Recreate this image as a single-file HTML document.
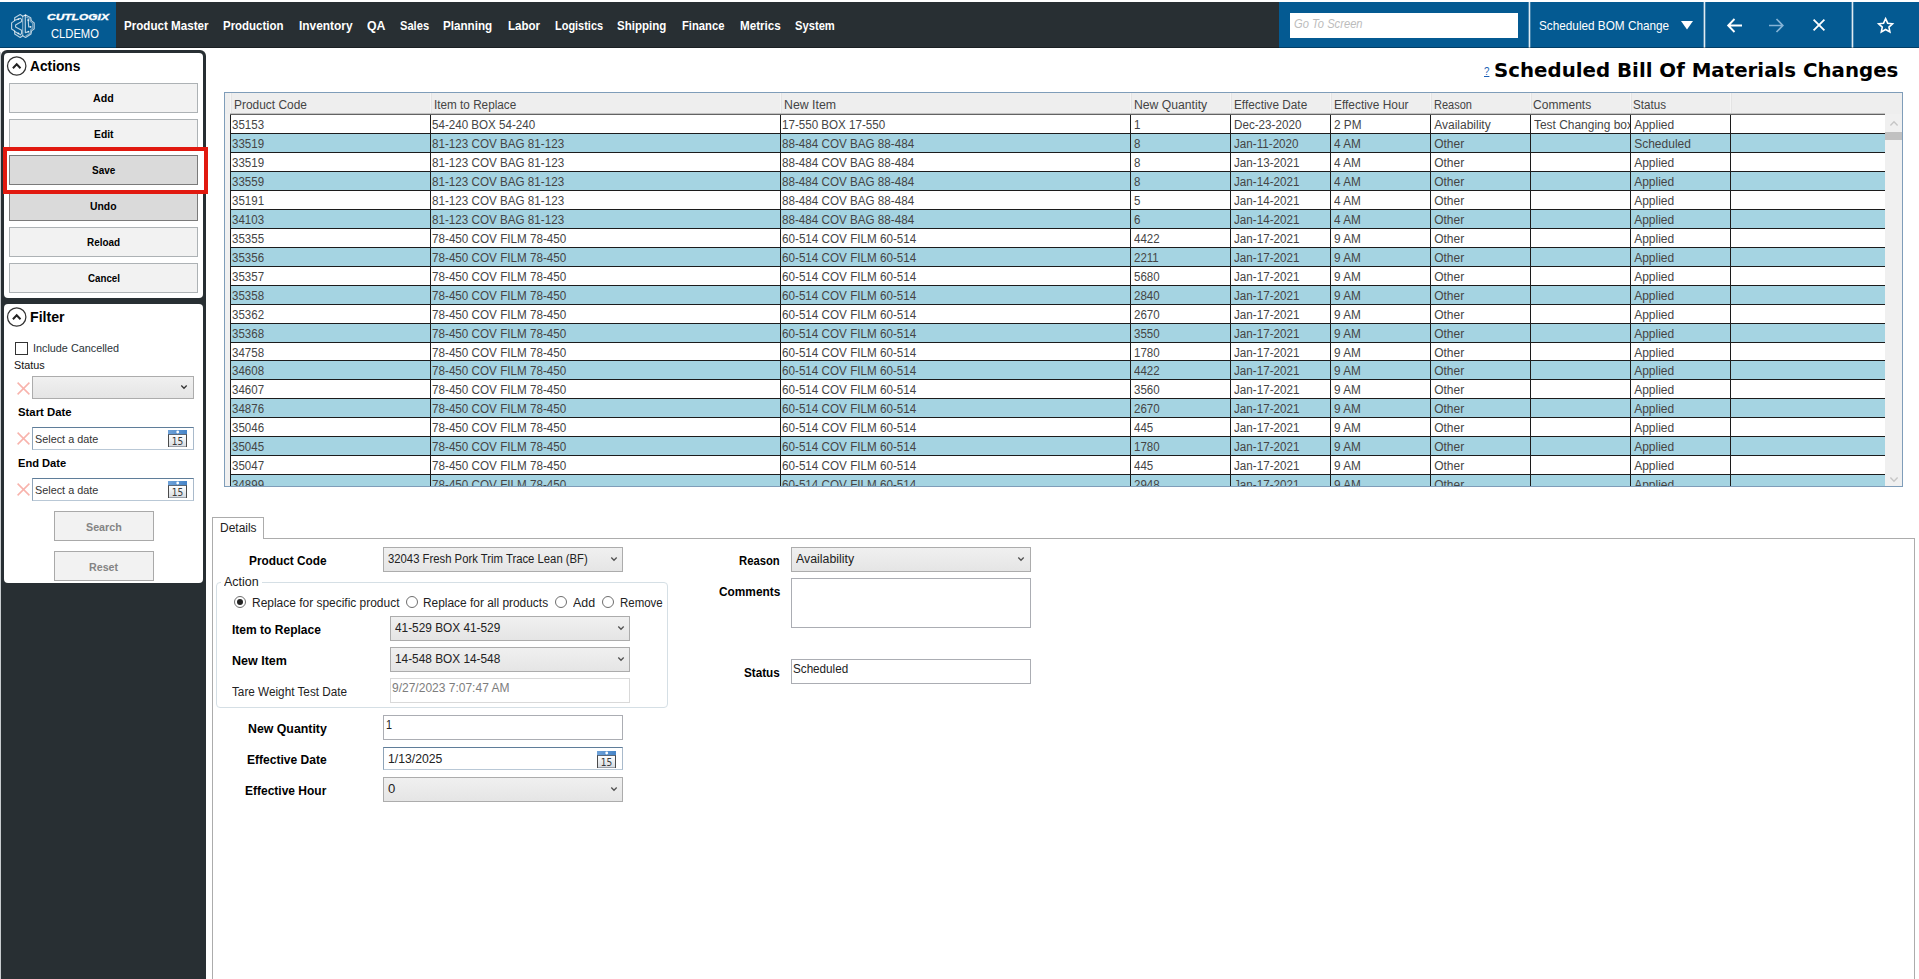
<!DOCTYPE html>
<html lang="en">
<head>
<meta charset="utf-8">
<title>Scheduled Bill Of Materials Changes</title>
<style>

*{box-sizing:border-box;margin:0;padding:0}
html,body{width:1919px;height:979px;overflow:hidden;background:#fff}
body{position:relative;font-family:"Liberation Sans",sans-serif;font-size:12px;color:#000}
.a{position:absolute}
.t{position:absolute;white-space:pre;line-height:1;transform-origin:0 50%;display:block}
#topbar{left:0;top:2px;width:1919px;height:46px;background:#282f33}
#topbar:after{content:'';position:absolute;left:0;bottom:0;width:100%;height:1px;background:rgba(0,0,0,.3)}
#logo{left:0;top:0;width:116px;height:46px;background:#045a92}
#tools{left:1279px;top:0;width:640px;height:46px;background:#045a92}
.vsep{top:0;width:3px;height:46px;background:linear-gradient(90deg,rgba(255,255,255,.3) 33.3%,rgba(255,255,255,.88) 33.3%,rgba(255,255,255,.88) 66.6%,rgba(255,255,255,.25) 66.6%)}
#goto{left:11px;top:11px;width:228px;height:25px;background:#fff}
#side{left:1px;top:50px;width:205px;height:929px;background:#282f33;border-radius:6px 6px 0 0}
.panel{left:3px;width:199px;background:#fff;border-radius:4px}
.btn{left:9px;width:189px;height:30px;background:#f2f2f2;border:1px solid #adb2b5}
.btn.dis{background:#dadada;border-color:#7a7a7a}
.sbtn{left:54px;width:100px;height:30px;background:#f2f2f2;border:1px solid #a9a9a9}
.combo{border:1px solid #acacac;background:linear-gradient(#f0f0f0,#e5e5e5)}
.tb{border:1px solid #abadb3;background:#fff}
.dp{border:1px solid;border-color:#5f7d99 #a9bacb #b9c8d6 #8fa4b8;background:#fff}
svg{position:absolute;overflow:visible}
#grid{left:224px;top:92px;width:1679px;height:395px;border:1px solid #7f9db9;background:#fff;overflow:hidden}
#ghead{left:0;top:0;width:1677px;height:21px;background:#eee}
.hsep{top:0;width:2px;height:20px;background:linear-gradient(90deg,#f5f5f5 50%,#e4e4e4 50%)}
.row{left:5px;width:1655px;border-top:1px solid #1c1c1c;background:#fff;overflow:hidden}
.row.b{background:#a5d4e2}
.c{position:absolute;top:0;height:20px;border-left:1px solid #1c1c1c;overflow:hidden}
#tab{left:212px;top:517px;width:52px;height:22px;border:1px solid #acacac;border-bottom:0;background:#fff}
#tabpanel{left:212px;top:538px;width:1703px;height:460px;border:1px solid #acacac;background:#fff}
#grp{left:216px;top:582px;width:452px;height:126px;border:1px solid #d5dfe5;border-radius:4px}
.radio{width:12.4px;height:12.4px;border:1px solid #6e6e6e;border-radius:50%;background:#fff}
.radio i{position:absolute;left:2.2px;top:2.2px;width:6px;height:6px;border-radius:50%;background:#222}

</style>
</head>
<body>
<div id="topbar" class="a"><div id="logo" class="a"><svg width="116" height="46" viewBox="0 2 116 46" fill="none" stroke="#fff" stroke-opacity=".72" stroke-width="1.15" stroke-linejoin="round" stroke-linecap="round">
<path d="M22.7 16.3L20.2 14.6L14.7 17.7L14.7 20.6L11.6 22.9L11.6 28.9L14.7 30.9L14.7 34L20.2 37.5L22.7 35.7L25.6 37.5L31 34L31.6 30.9L34.2 28.9L34.2 22.9L31.3 20.6L30.7 17.7L25.6 14.9Z"/>
<path d="M14.7 20.3L18.4 19.1L20.4 18.3L21.6 19.4L21.6 21.4L15.6 24.9L15.6 26.9L21.6 30.3L21.6 33.4L20.4 34.9L18.4 33.4L14.7 31.4"/>
<path d="M22.7 16.3L22.7 35.7" stroke-opacity=".5"/>
<path d="M25.3 15.4L25.3 32.6L28.4 31.7M28.2 20L28.7 26.9L30.7 26.9"/>
<path d="M26.7 17.2L29.9 18.9L30.2 21.4L32.7 23.4L32.7 28.3L30.7 29.7L30.2 33.2L25.9 35.7" stroke-opacity=".45"/>
<g fill="#fff" fill-opacity=".8" stroke="none"><circle cx="18.4" cy="19.1" r=".9"/><circle cx="18.4" cy="33.4" r=".9"/><circle cx="28.4" cy="31.7" r=".9"/><circle cx="28.2" cy="20" r=".9"/><circle cx="30.7" cy="26.9" r=".8"/><circle cx="25.4" cy="15.3" r=".9"/></g>
</svg><span class="t" style="left:47.3px;top:11.4px;font-size:9.2px;font-weight:700;font-style:italic;color:#fff;transform:scaleX(1.3040);-webkit-text-stroke:.35px #fff;">CUTLOGIX</span><span class="t" style="left:50.9px;top:25.7px;font-size:12px;color:#fff;transform:scaleX(0.9329);">CLDEMO</span></div><nav><span class="t" style="left:123.8px;top:17.0px;font-size:13px;font-weight:700;color:#fff;transform:scaleX(0.8929);">Product Master</span><span class="t" style="left:223.4px;top:17.0px;font-size:13px;font-weight:700;color:#fff;transform:scaleX(0.8818);">Production</span><span class="t" style="left:299.0px;top:17.0px;font-size:13px;font-weight:700;color:#fff;transform:scaleX(0.9160);">Inventory</span><span class="t" style="left:367.1px;top:17.0px;font-size:13px;font-weight:700;color:#fff;transform:scaleX(0.9487);">QA</span><span class="t" style="left:400.0px;top:17.0px;font-size:13px;font-weight:700;color:#fff;transform:scaleX(0.8563);">Sales</span><span class="t" style="left:443.4px;top:17.0px;font-size:13px;font-weight:700;color:#fff;transform:scaleX(0.8963);">Planning</span><span class="t" style="left:507.9px;top:17.0px;font-size:13px;font-weight:700;color:#fff;transform:scaleX(0.8886);">Labor</span><span class="t" style="left:554.8px;top:17.0px;font-size:13px;font-weight:700;color:#fff;transform:scaleX(0.8427);">Logistics</span><span class="t" style="left:617.4px;top:17.0px;font-size:13px;font-weight:700;color:#fff;transform:scaleX(0.8847);">Shipping</span><span class="t" style="left:681.9px;top:17.0px;font-size:13px;font-weight:700;color:#fff;transform:scaleX(0.8651);">Finance</span><span class="t" style="left:739.8px;top:17.0px;font-size:13px;font-weight:700;color:#fff;transform:scaleX(0.8961);">Metrics</span><span class="t" style="left:795.4px;top:17.0px;font-size:13px;font-weight:700;color:#fff;transform:scaleX(0.8605);">System</span></nav><div id="tools" class="a"><div id="goto" class="a"><span class="t" style="left:3.8px;top:4.8px;font-size:12px;font-style:italic;color:#bcbcbc;transform:scaleX(0.9319);">Go To Screen</span></div><div class="a vsep" style="left:249px"></div><span class="t" style="left:259.5px;top:17.2px;font-size:13px;color:#fff;transform:scaleX(0.9047);">Scheduled BOM Change</span><svg style="left:402px;top:18.5px" width="12" height="9" viewBox="0 0 12 9"><path d="M0 0H12L6 8.5Z" fill="#fff"/></svg><div class="a vsep" style="left:424px;background:linear-gradient(90deg,rgba(255,255,255,.65) 33.3%%,rgba(255,255,255,.9) 33.3%%,rgba(255,255,255,.9) 66.6%%,rgba(255,255,255,.3) 66.6%%)"></div><svg style="left:448.1px;top:15.7px" width="16" height="15" viewBox="0 0 16 15" fill="none" stroke="#fff" stroke-width="1.9"><path d="M15 7.5H1.5M7.5 1L1.2 7.5L7.5 14"/></svg><svg style="left:489.4px;top:15.9px" width="16" height="15" viewBox="0 0 16 15" fill="none" stroke="#85b3d6" stroke-width="1.7"><path d="M1 7.5H14.5M8.5 1L14.8 7.5L8.5 14"/></svg><svg style="left:533.6px;top:17.3px" width="12" height="12" viewBox="0 0 12 12" fill="none" stroke="#fff" stroke-width="1.8"><path d="M.6 .6L11.4 11.4M11.4 .6L.6 11.4"/></svg><div class="a vsep" style="left:572px;background:linear-gradient(90deg,rgba(255,255,255,.55) 33.3%%,rgba(255,255,255,.9) 33.3%%,rgba(255,255,255,.9) 66.6%%,rgba(255,255,255,.1) 66.6%%)"></div><svg style="left:0;top:0" width="640" height="46" viewBox="0 0 640 46" fill="none" stroke="#fff" stroke-width="1.6" stroke-linejoin="miter"><path d="M606.60 16.70L608.66 21.17L613.54 21.74L609.93 25.08L610.89 29.91L606.60 27.50L602.31 29.91L603.27 25.08L599.66 21.74L604.54 21.17Z"/></svg></div></div><div class="a" style="left:0;top:52px;width:1px;height:927px;background:#c9cdd0"></div><aside id="side" class="a"><section class="a panel" style="top:3px;height:245px"></section><svg style="left:6px;top:5.5px" width="20" height="20" viewBox="0 0 20 20" fill="none" stroke="#222"><circle cx="9.7" cy="10" r="9.2" stroke-width="1.25" stroke="#333"/><path d="M5.9 12.2L9.7 8.3L13.5 12.2" stroke-width="2"/></svg><span class="t" style="left:28.7px;top:9.2px;font-size:14px;font-weight:700;transform:scaleX(0.9816);">Actions</span><div class="a btn" style="left:8px;top:33px"></div><span class="t" style="left:92.2px;top:43.8px;font-size:10px;font-weight:700;transform:scaleX(1.0641);">Add</span><div class="a btn" style="left:8px;top:69px"></div><span class="t" style="left:92.8px;top:79.8px;font-size:10px;font-weight:700;transform:scaleX(1.0323);">Edit</span><div class="a btn dis" style="left:8px;top:105px"></div><span class="t" style="left:91.1px;top:115.8px;font-size:10px;font-weight:700;transform:scaleX(0.9975);">Save</span><div class="a btn dis" style="left:8px;top:141px"></div><span class="t" style="left:89.4px;top:151.8px;font-size:10px;font-weight:700;transform:scaleX(1.0373);">Undo</span><div class="a btn" style="left:8px;top:177px"></div><span class="t" style="left:86.3px;top:187.8px;font-size:10px;font-weight:700;transform:scaleX(0.9897);">Reload</span><div class="a btn" style="left:8px;top:213px"></div><span class="t" style="left:86.6px;top:223.8px;font-size:10px;font-weight:700;transform:scaleX(0.9727);">Cancel</span><div class="a" style="left:2px;top:97px;width:205px;height:47px;border:4px solid #e1190f;z-index:5"></div><div class="a" style="left:6px;top:101px;width:197px;height:4px;background:#fff"></div><div class="a" style="left:198px;top:101px;width:5px;height:39px;background:#fff"></div><div class="a" style="left:6px;top:135px;width:197px;height:5px;background:#fff"></div><section class="a panel" style="top:254px;height:279px"></section><svg style="left:6px;top:256.5px" width="20" height="20" viewBox="0 0 20 20" fill="none" stroke="#222"><circle cx="9.7" cy="10" r="9.2" stroke-width="1.25" stroke="#333"/><path d="M5.9 12.2L9.7 8.3L13.5 12.2" stroke-width="2"/></svg><span class="t" style="left:29.0px;top:260.1px;font-size:14px;font-weight:700;transform:scaleX(1.0107);">Filter</span><div class="a" style="left:14px;top:292px;width:13px;height:13px;border:1px solid #333;background:#fff"></div><span class="t" style="left:32.1px;top:292.7px;font-size:11px;color:#2a3338;transform:scaleX(0.9834);">Include Cancelled</span><span class="t" style="left:13.3px;top:310.2px;font-size:11px;color:#111;transform:scaleX(0.9844);">Status</span><svg style="left:16.0px;top:331.6px" width="13" height="13" viewBox="0 0 13 13" fill="none" stroke="#f8b3ac" stroke-width="1.5"><path d="M.6 .6L12.4 12.4M12.4 .6L.6 12.4"/></svg><div class="a combo" style="left:31px;top:326px;width:162px;height:23px"></div><svg style="left:180.4px;top:334.8px" width="6" height="4" viewBox="0 0 6 4" fill="none" stroke="#333" stroke-width="1.25"><path d="M.3 .5L3 3.3L5.7 .5"/></svg><span class="t" style="left:16.9px;top:357.2px;font-size:11px;font-weight:700;transform:scaleX(1.0333);">Start Date</span><svg style="left:16.0px;top:382.4px" width="13" height="13" viewBox="0 0 13 13" fill="none" stroke="#f8b3ac" stroke-width="1.5"><path d="M.6 .6L12.4 12.4M12.4 .6L.6 12.4"/></svg><div class="a dp" style="left:31px;top:377px;width:162px;height:23px"></div><span class="t" style="left:34.1px;top:383.7px;font-size:11px;color:#333;transform:scaleX(0.9857);">Select a date</span><svg style="left:167.0px;top:380.0px" width="19" height="17" viewBox="0 0 19 17"><defs><linearGradient id="cg547" x1="0" y1="0" x2="0" y2="1"><stop offset="0.3" stop-color="#fff"/><stop offset="1" stop-color="#d3d8de"/></linearGradient><linearGradient id="cb547" x1="0" y1="0" x2="1" y2="0"><stop offset="0" stop-color="#6fa2d8"/><stop offset="1" stop-color="#4584c8"/></linearGradient></defs><rect x="0" y="0" width="19" height="17" fill="url(#cg547)"/><rect x="0" y="16" width="19" height="1" fill="#9aa0a8"/><rect x="0" y="0" width="1" height="17" fill="#4a4a4a"/><rect x="18" y="0" width="1" height="17" fill="#4a4a4a"/><rect x="0" y="0" width="19" height="4.2" fill="url(#cb547)"/><rect x="0" y="4.1" width="19" height=".9" fill="#4d5b6b"/><circle cx="9.7" cy="2" r="1.4" fill="#fff"/><text x="9.6" y="14.9" text-anchor="middle" font-family="DejaVu Sans, Liberation Sans, sans-serif" font-size="10" textLength="11.5" lengthAdjust="spacingAndGlyphs" fill="#3a3a3a">15</text></svg><span class="t" style="left:16.9px;top:408.1px;font-size:11px;font-weight:700;transform:scaleX(1.0107);">End Date</span><svg style="left:16.0px;top:433.4px" width="13" height="13" viewBox="0 0 13 13" fill="none" stroke="#f8b3ac" stroke-width="1.5"><path d="M.6 .6L12.4 12.4M12.4 .6L.6 12.4"/></svg><div class="a dp" style="left:31px;top:428px;width:162px;height:23px"></div><span class="t" style="left:34.1px;top:434.7px;font-size:11px;color:#333;transform:scaleX(0.9857);">Select a date</span><svg style="left:167.0px;top:431.0px" width="19" height="17" viewBox="0 0 19 17"><defs><linearGradient id="cg598" x1="0" y1="0" x2="0" y2="1"><stop offset="0.3" stop-color="#fff"/><stop offset="1" stop-color="#d3d8de"/></linearGradient><linearGradient id="cb598" x1="0" y1="0" x2="1" y2="0"><stop offset="0" stop-color="#6fa2d8"/><stop offset="1" stop-color="#4584c8"/></linearGradient></defs><rect x="0" y="0" width="19" height="17" fill="url(#cg598)"/><rect x="0" y="16" width="19" height="1" fill="#9aa0a8"/><rect x="0" y="0" width="1" height="17" fill="#4a4a4a"/><rect x="18" y="0" width="1" height="17" fill="#4a4a4a"/><rect x="0" y="0" width="19" height="4.2" fill="url(#cb598)"/><rect x="0" y="4.1" width="19" height=".9" fill="#4d5b6b"/><circle cx="9.7" cy="2" r="1.4" fill="#fff"/><text x="9.6" y="14.9" text-anchor="middle" font-family="DejaVu Sans, Liberation Sans, sans-serif" font-size="10" textLength="11.5" lengthAdjust="spacingAndGlyphs" fill="#3a3a3a">15</text></svg><div class="a sbtn" style="left:53px;top:461px"></div><span class="t" style="left:84.7px;top:472.1px;font-size:11.5px;font-weight:700;color:#848484;transform:scaleX(0.9307);">Search</span><div class="a sbtn" style="left:53px;top:501px"></div><span class="t" style="left:88.3px;top:512.1px;font-size:11.5px;font-weight:700;color:#848484;transform:scaleX(0.9289);">Reset</span></aside><header><span class="t" style="left:1484.0px;top:65.5px;font-size:10.5px;color:#1a5fb4;transform:scaleX(0.9241);text-decoration:underline;">?</span><h1 style="font-size:inherit;font-weight:inherit"><span class="t" style="left:1494.3px;top:59.5px;font-size:20px;font-weight:700;font-family:'DejaVu Sans','Liberation Sans',sans-serif;transform:scaleX(0.9896);">Scheduled Bill Of Materials Changes</span></h1></header><main><div id="grid" class="a"><div id="ghead" class="a"><span class="t" style="left:8.9px;top:6.0px;font-size:12px;color:#444;transform:scaleX(0.9933);">Product Code</span><span class="t" style="left:209.4px;top:6.0px;font-size:12px;color:#444;transform:scaleX(0.9780);">Item to Replace</span><span class="t" style="left:558.6px;top:6.0px;font-size:12px;color:#444;transform:scaleX(1.0259);">New Item</span><span class="t" style="left:908.6px;top:6.0px;font-size:12px;color:#444;transform:scaleX(1.0162);">New Quantity</span><span class="t" style="left:1008.6px;top:6.0px;font-size:12px;color:#444;transform:scaleX(0.9828);">Effective Date</span><span class="t" style="left:1108.6px;top:6.0px;font-size:12px;color:#444;transform:scaleX(0.9913);">Effective Hour</span><span class="t" style="left:1208.9px;top:6.0px;font-size:12px;color:#444;transform:scaleX(0.9160);">Reason</span><span class="t" style="left:1308.1px;top:6.0px;font-size:12px;color:#444;transform:scaleX(1.0032);">Comments</span><span class="t" style="left:1408.1px;top:6.0px;font-size:12px;color:#444;transform:scaleX(0.9697);">Status</span><div class="a hsep" style="left:5px"></div><div class="a hsep" style="left:205px"></div><div class="a hsep" style="left:555px"></div><div class="a hsep" style="left:905px"></div><div class="a hsep" style="left:1005px"></div><div class="a hsep" style="left:1105px"></div><div class="a hsep" style="left:1205px"></div><div class="a hsep" style="left:1305px"></div><div class="a hsep" style="left:1405px"></div><div class="a hsep" style="left:1505px"></div></div><div class="a" style="left:0;top:21px;width:6px;height:380px;background:#f0f0f0"></div><div class="a" style="left:5px;top:20px;width:1655px;height:1px;background:#c2c2c2"></div><div class="a" style="left:1660px;top:21px;width:17px;height:380px;background:#f0f0f0"></div><div class="a" style="left:1660px;top:39px;width:17px;height:8px;background:#c1c1c1"></div><svg style="left:1664.5px;top:27.5px" width="8" height="5" viewBox="0 0 8 5" fill="none" stroke="#c6c6c6" stroke-width="1.4"><path d="M.4 4.5L4 .8L7.6 4.5"/></svg><svg style="left:1664.5px;top:383.5px" width="8" height="5" viewBox="0 0 8 5" fill="none" stroke="#c6c6c6" stroke-width="1.4"><path d="M.4 .5L4 4.2L7.6 .5"/></svg><div class="a row" style="top:21px;height:19px;border-top-color:#636363"><div class="c" style="left:0px;width:200px"><span class="t" style="left:1.3px;top:4.4px;font-size:12px;color:#444;transform:scaleX(0.960);">35153</span></div><div class="c" style="left:200px;width:350px"><span class="t" style="left:1.3px;top:4.4px;font-size:12px;color:#444;transform:scaleX(0.967);">54-240 BOX 54-240</span></div><div class="c" style="left:550px;width:350px"><span class="t" style="left:1.3px;top:4.4px;font-size:12px;color:#444;transform:scaleX(0.967);">17-550 BOX 17-550</span></div><div class="c" style="left:900px;width:100px"><span class="t" style="left:3.2px;top:4.4px;font-size:12px;color:#444;transform:scaleX(0.960);">1</span></div><div class="c" style="left:1000px;width:100px"><span class="t" style="left:3.2px;top:4.4px;font-size:12px;color:#444;transform:scaleX(0.971);">Dec-23-2020</span></div><div class="c" style="left:1100px;width:100px"><span class="t" style="left:3.2px;top:4.4px;font-size:12px;color:#444;transform:scaleX(0.980);">2 PM</span></div><div class="c" style="left:1200px;width:100px"><span class="t" style="left:3.2px;top:4.4px;font-size:12px;color:#444;transform:scaleX(1.000);">Availability</span></div><div class="c" style="left:1300px;width:100px"><span class="t" style="left:3.2px;top:4.4px;font-size:12px;color:#444;transform:scaleX(0.995);">Test Changing box</span></div><div class="c" style="left:1400px;width:100px"><span class="t" style="left:3.2px;top:4.4px;font-size:12px;color:#444;transform:scaleX(1.000);">Applied</span></div><div class="c" style="left:1500px;width:155px"></div></div><div class="a row b" style="top:40px;height:19px"><div class="c" style="left:0px;width:200px"><span class="t" style="left:1.3px;top:4.4px;font-size:12px;color:#444;transform:scaleX(0.960);">33519</span></div><div class="c" style="left:200px;width:350px"><span class="t" style="left:1.3px;top:4.4px;font-size:12px;color:#444;transform:scaleX(0.971);">81-123 COV BAG 81-123</span></div><div class="c" style="left:550px;width:350px"><span class="t" style="left:1.3px;top:4.4px;font-size:12px;color:#444;transform:scaleX(0.971);">88-484 COV BAG 88-484</span></div><div class="c" style="left:900px;width:100px"><span class="t" style="left:3.2px;top:4.4px;font-size:12px;color:#444;transform:scaleX(0.960);">8</span></div><div class="c" style="left:1000px;width:100px"><span class="t" style="left:3.2px;top:4.4px;font-size:12px;color:#444;transform:scaleX(0.971);">Jan-11-2020</span></div><div class="c" style="left:1100px;width:100px"><span class="t" style="left:3.2px;top:4.4px;font-size:12px;color:#444;transform:scaleX(0.980);">4 AM</span></div><div class="c" style="left:1200px;width:100px"><span class="t" style="left:3.2px;top:4.4px;font-size:12px;color:#444;transform:scaleX(1.000);">Other</span></div><div class="c" style="left:1300px;width:100px"></div><div class="c" style="left:1400px;width:100px"><span class="t" style="left:3.2px;top:4.4px;font-size:12px;color:#444;transform:scaleX(1.000);">Scheduled</span></div><div class="c" style="left:1500px;width:155px"></div></div><div class="a row" style="top:59px;height:19px"><div class="c" style="left:0px;width:200px"><span class="t" style="left:1.3px;top:4.4px;font-size:12px;color:#444;transform:scaleX(0.960);">33519</span></div><div class="c" style="left:200px;width:350px"><span class="t" style="left:1.3px;top:4.4px;font-size:12px;color:#444;transform:scaleX(0.971);">81-123 COV BAG 81-123</span></div><div class="c" style="left:550px;width:350px"><span class="t" style="left:1.3px;top:4.4px;font-size:12px;color:#444;transform:scaleX(0.971);">88-484 COV BAG 88-484</span></div><div class="c" style="left:900px;width:100px"><span class="t" style="left:3.2px;top:4.4px;font-size:12px;color:#444;transform:scaleX(0.960);">8</span></div><div class="c" style="left:1000px;width:100px"><span class="t" style="left:3.2px;top:4.4px;font-size:12px;color:#444;transform:scaleX(0.971);">Jan-13-2021</span></div><div class="c" style="left:1100px;width:100px"><span class="t" style="left:3.2px;top:4.4px;font-size:12px;color:#444;transform:scaleX(0.980);">4 AM</span></div><div class="c" style="left:1200px;width:100px"><span class="t" style="left:3.2px;top:4.4px;font-size:12px;color:#444;transform:scaleX(1.000);">Other</span></div><div class="c" style="left:1300px;width:100px"></div><div class="c" style="left:1400px;width:100px"><span class="t" style="left:3.2px;top:4.4px;font-size:12px;color:#444;transform:scaleX(1.000);">Applied</span></div><div class="c" style="left:1500px;width:155px"></div></div><div class="a row b" style="top:78px;height:19px"><div class="c" style="left:0px;width:200px"><span class="t" style="left:1.3px;top:4.4px;font-size:12px;color:#444;transform:scaleX(0.960);">33559</span></div><div class="c" style="left:200px;width:350px"><span class="t" style="left:1.3px;top:4.4px;font-size:12px;color:#444;transform:scaleX(0.971);">81-123 COV BAG 81-123</span></div><div class="c" style="left:550px;width:350px"><span class="t" style="left:1.3px;top:4.4px;font-size:12px;color:#444;transform:scaleX(0.971);">88-484 COV BAG 88-484</span></div><div class="c" style="left:900px;width:100px"><span class="t" style="left:3.2px;top:4.4px;font-size:12px;color:#444;transform:scaleX(0.960);">8</span></div><div class="c" style="left:1000px;width:100px"><span class="t" style="left:3.2px;top:4.4px;font-size:12px;color:#444;transform:scaleX(0.971);">Jan-14-2021</span></div><div class="c" style="left:1100px;width:100px"><span class="t" style="left:3.2px;top:4.4px;font-size:12px;color:#444;transform:scaleX(0.980);">4 AM</span></div><div class="c" style="left:1200px;width:100px"><span class="t" style="left:3.2px;top:4.4px;font-size:12px;color:#444;transform:scaleX(1.000);">Other</span></div><div class="c" style="left:1300px;width:100px"></div><div class="c" style="left:1400px;width:100px"><span class="t" style="left:3.2px;top:4.4px;font-size:12px;color:#444;transform:scaleX(1.000);">Applied</span></div><div class="c" style="left:1500px;width:155px"></div></div><div class="a row" style="top:97px;height:19px"><div class="c" style="left:0px;width:200px"><span class="t" style="left:1.3px;top:4.4px;font-size:12px;color:#444;transform:scaleX(0.960);">35191</span></div><div class="c" style="left:200px;width:350px"><span class="t" style="left:1.3px;top:4.4px;font-size:12px;color:#444;transform:scaleX(0.971);">81-123 COV BAG 81-123</span></div><div class="c" style="left:550px;width:350px"><span class="t" style="left:1.3px;top:4.4px;font-size:12px;color:#444;transform:scaleX(0.971);">88-484 COV BAG 88-484</span></div><div class="c" style="left:900px;width:100px"><span class="t" style="left:3.2px;top:4.4px;font-size:12px;color:#444;transform:scaleX(0.960);">5</span></div><div class="c" style="left:1000px;width:100px"><span class="t" style="left:3.2px;top:4.4px;font-size:12px;color:#444;transform:scaleX(0.971);">Jan-14-2021</span></div><div class="c" style="left:1100px;width:100px"><span class="t" style="left:3.2px;top:4.4px;font-size:12px;color:#444;transform:scaleX(0.980);">4 AM</span></div><div class="c" style="left:1200px;width:100px"><span class="t" style="left:3.2px;top:4.4px;font-size:12px;color:#444;transform:scaleX(1.000);">Other</span></div><div class="c" style="left:1300px;width:100px"></div><div class="c" style="left:1400px;width:100px"><span class="t" style="left:3.2px;top:4.4px;font-size:12px;color:#444;transform:scaleX(1.000);">Applied</span></div><div class="c" style="left:1500px;width:155px"></div></div><div class="a row b" style="top:116px;height:19px"><div class="c" style="left:0px;width:200px"><span class="t" style="left:1.3px;top:4.4px;font-size:12px;color:#444;transform:scaleX(0.960);">34103</span></div><div class="c" style="left:200px;width:350px"><span class="t" style="left:1.3px;top:4.4px;font-size:12px;color:#444;transform:scaleX(0.971);">81-123 COV BAG 81-123</span></div><div class="c" style="left:550px;width:350px"><span class="t" style="left:1.3px;top:4.4px;font-size:12px;color:#444;transform:scaleX(0.971);">88-484 COV BAG 88-484</span></div><div class="c" style="left:900px;width:100px"><span class="t" style="left:3.2px;top:4.4px;font-size:12px;color:#444;transform:scaleX(0.960);">6</span></div><div class="c" style="left:1000px;width:100px"><span class="t" style="left:3.2px;top:4.4px;font-size:12px;color:#444;transform:scaleX(0.971);">Jan-14-2021</span></div><div class="c" style="left:1100px;width:100px"><span class="t" style="left:3.2px;top:4.4px;font-size:12px;color:#444;transform:scaleX(0.980);">4 AM</span></div><div class="c" style="left:1200px;width:100px"><span class="t" style="left:3.2px;top:4.4px;font-size:12px;color:#444;transform:scaleX(1.000);">Other</span></div><div class="c" style="left:1300px;width:100px"></div><div class="c" style="left:1400px;width:100px"><span class="t" style="left:3.2px;top:4.4px;font-size:12px;color:#444;transform:scaleX(1.000);">Applied</span></div><div class="c" style="left:1500px;width:155px"></div></div><div class="a row" style="top:135px;height:19px"><div class="c" style="left:0px;width:200px"><span class="t" style="left:1.3px;top:4.4px;font-size:12px;color:#444;transform:scaleX(0.960);">35355</span></div><div class="c" style="left:200px;width:350px"><span class="t" style="left:1.3px;top:4.4px;font-size:12px;color:#444;transform:scaleX(0.973);">78-450 COV FILM 78-450</span></div><div class="c" style="left:550px;width:350px"><span class="t" style="left:1.3px;top:4.4px;font-size:12px;color:#444;transform:scaleX(0.973);">60-514 COV FILM 60-514</span></div><div class="c" style="left:900px;width:100px"><span class="t" style="left:3.2px;top:4.4px;font-size:12px;color:#444;transform:scaleX(0.960);">4422</span></div><div class="c" style="left:1000px;width:100px"><span class="t" style="left:3.2px;top:4.4px;font-size:12px;color:#444;transform:scaleX(0.971);">Jan-17-2021</span></div><div class="c" style="left:1100px;width:100px"><span class="t" style="left:3.2px;top:4.4px;font-size:12px;color:#444;transform:scaleX(0.980);">9 AM</span></div><div class="c" style="left:1200px;width:100px"><span class="t" style="left:3.2px;top:4.4px;font-size:12px;color:#444;transform:scaleX(1.000);">Other</span></div><div class="c" style="left:1300px;width:100px"></div><div class="c" style="left:1400px;width:100px"><span class="t" style="left:3.2px;top:4.4px;font-size:12px;color:#444;transform:scaleX(1.000);">Applied</span></div><div class="c" style="left:1500px;width:155px"></div></div><div class="a row b" style="top:154px;height:19px"><div class="c" style="left:0px;width:200px"><span class="t" style="left:1.3px;top:4.4px;font-size:12px;color:#444;transform:scaleX(0.960);">35356</span></div><div class="c" style="left:200px;width:350px"><span class="t" style="left:1.3px;top:4.4px;font-size:12px;color:#444;transform:scaleX(0.973);">78-450 COV FILM 78-450</span></div><div class="c" style="left:550px;width:350px"><span class="t" style="left:1.3px;top:4.4px;font-size:12px;color:#444;transform:scaleX(0.973);">60-514 COV FILM 60-514</span></div><div class="c" style="left:900px;width:100px"><span class="t" style="left:3.2px;top:4.4px;font-size:12px;color:#444;transform:scaleX(0.960);">2211</span></div><div class="c" style="left:1000px;width:100px"><span class="t" style="left:3.2px;top:4.4px;font-size:12px;color:#444;transform:scaleX(0.971);">Jan-17-2021</span></div><div class="c" style="left:1100px;width:100px"><span class="t" style="left:3.2px;top:4.4px;font-size:12px;color:#444;transform:scaleX(0.980);">9 AM</span></div><div class="c" style="left:1200px;width:100px"><span class="t" style="left:3.2px;top:4.4px;font-size:12px;color:#444;transform:scaleX(1.000);">Other</span></div><div class="c" style="left:1300px;width:100px"></div><div class="c" style="left:1400px;width:100px"><span class="t" style="left:3.2px;top:4.4px;font-size:12px;color:#444;transform:scaleX(1.000);">Applied</span></div><div class="c" style="left:1500px;width:155px"></div></div><div class="a row" style="top:173px;height:19px"><div class="c" style="left:0px;width:200px"><span class="t" style="left:1.3px;top:4.4px;font-size:12px;color:#444;transform:scaleX(0.960);">35357</span></div><div class="c" style="left:200px;width:350px"><span class="t" style="left:1.3px;top:4.4px;font-size:12px;color:#444;transform:scaleX(0.973);">78-450 COV FILM 78-450</span></div><div class="c" style="left:550px;width:350px"><span class="t" style="left:1.3px;top:4.4px;font-size:12px;color:#444;transform:scaleX(0.973);">60-514 COV FILM 60-514</span></div><div class="c" style="left:900px;width:100px"><span class="t" style="left:3.2px;top:4.4px;font-size:12px;color:#444;transform:scaleX(0.960);">5680</span></div><div class="c" style="left:1000px;width:100px"><span class="t" style="left:3.2px;top:4.4px;font-size:12px;color:#444;transform:scaleX(0.971);">Jan-17-2021</span></div><div class="c" style="left:1100px;width:100px"><span class="t" style="left:3.2px;top:4.4px;font-size:12px;color:#444;transform:scaleX(0.980);">9 AM</span></div><div class="c" style="left:1200px;width:100px"><span class="t" style="left:3.2px;top:4.4px;font-size:12px;color:#444;transform:scaleX(1.000);">Other</span></div><div class="c" style="left:1300px;width:100px"></div><div class="c" style="left:1400px;width:100px"><span class="t" style="left:3.2px;top:4.4px;font-size:12px;color:#444;transform:scaleX(1.000);">Applied</span></div><div class="c" style="left:1500px;width:155px"></div></div><div class="a row b" style="top:192px;height:19px"><div class="c" style="left:0px;width:200px"><span class="t" style="left:1.3px;top:4.4px;font-size:12px;color:#444;transform:scaleX(0.960);">35358</span></div><div class="c" style="left:200px;width:350px"><span class="t" style="left:1.3px;top:4.4px;font-size:12px;color:#444;transform:scaleX(0.973);">78-450 COV FILM 78-450</span></div><div class="c" style="left:550px;width:350px"><span class="t" style="left:1.3px;top:4.4px;font-size:12px;color:#444;transform:scaleX(0.973);">60-514 COV FILM 60-514</span></div><div class="c" style="left:900px;width:100px"><span class="t" style="left:3.2px;top:4.4px;font-size:12px;color:#444;transform:scaleX(0.960);">2840</span></div><div class="c" style="left:1000px;width:100px"><span class="t" style="left:3.2px;top:4.4px;font-size:12px;color:#444;transform:scaleX(0.971);">Jan-17-2021</span></div><div class="c" style="left:1100px;width:100px"><span class="t" style="left:3.2px;top:4.4px;font-size:12px;color:#444;transform:scaleX(0.980);">9 AM</span></div><div class="c" style="left:1200px;width:100px"><span class="t" style="left:3.2px;top:4.4px;font-size:12px;color:#444;transform:scaleX(1.000);">Other</span></div><div class="c" style="left:1300px;width:100px"></div><div class="c" style="left:1400px;width:100px"><span class="t" style="left:3.2px;top:4.4px;font-size:12px;color:#444;transform:scaleX(1.000);">Applied</span></div><div class="c" style="left:1500px;width:155px"></div></div><div class="a row" style="top:211px;height:19px"><div class="c" style="left:0px;width:200px"><span class="t" style="left:1.3px;top:4.4px;font-size:12px;color:#444;transform:scaleX(0.960);">35362</span></div><div class="c" style="left:200px;width:350px"><span class="t" style="left:1.3px;top:4.4px;font-size:12px;color:#444;transform:scaleX(0.973);">78-450 COV FILM 78-450</span></div><div class="c" style="left:550px;width:350px"><span class="t" style="left:1.3px;top:4.4px;font-size:12px;color:#444;transform:scaleX(0.973);">60-514 COV FILM 60-514</span></div><div class="c" style="left:900px;width:100px"><span class="t" style="left:3.2px;top:4.4px;font-size:12px;color:#444;transform:scaleX(0.960);">2670</span></div><div class="c" style="left:1000px;width:100px"><span class="t" style="left:3.2px;top:4.4px;font-size:12px;color:#444;transform:scaleX(0.971);">Jan-17-2021</span></div><div class="c" style="left:1100px;width:100px"><span class="t" style="left:3.2px;top:4.4px;font-size:12px;color:#444;transform:scaleX(0.980);">9 AM</span></div><div class="c" style="left:1200px;width:100px"><span class="t" style="left:3.2px;top:4.4px;font-size:12px;color:#444;transform:scaleX(1.000);">Other</span></div><div class="c" style="left:1300px;width:100px"></div><div class="c" style="left:1400px;width:100px"><span class="t" style="left:3.2px;top:4.4px;font-size:12px;color:#444;transform:scaleX(1.000);">Applied</span></div><div class="c" style="left:1500px;width:155px"></div></div><div class="a row b" style="top:230px;height:19px"><div class="c" style="left:0px;width:200px"><span class="t" style="left:1.3px;top:4.4px;font-size:12px;color:#444;transform:scaleX(0.960);">35368</span></div><div class="c" style="left:200px;width:350px"><span class="t" style="left:1.3px;top:4.4px;font-size:12px;color:#444;transform:scaleX(0.973);">78-450 COV FILM 78-450</span></div><div class="c" style="left:550px;width:350px"><span class="t" style="left:1.3px;top:4.4px;font-size:12px;color:#444;transform:scaleX(0.973);">60-514 COV FILM 60-514</span></div><div class="c" style="left:900px;width:100px"><span class="t" style="left:3.2px;top:4.4px;font-size:12px;color:#444;transform:scaleX(0.960);">3550</span></div><div class="c" style="left:1000px;width:100px"><span class="t" style="left:3.2px;top:4.4px;font-size:12px;color:#444;transform:scaleX(0.971);">Jan-17-2021</span></div><div class="c" style="left:1100px;width:100px"><span class="t" style="left:3.2px;top:4.4px;font-size:12px;color:#444;transform:scaleX(0.980);">9 AM</span></div><div class="c" style="left:1200px;width:100px"><span class="t" style="left:3.2px;top:4.4px;font-size:12px;color:#444;transform:scaleX(1.000);">Other</span></div><div class="c" style="left:1300px;width:100px"></div><div class="c" style="left:1400px;width:100px"><span class="t" style="left:3.2px;top:4.4px;font-size:12px;color:#444;transform:scaleX(1.000);">Applied</span></div><div class="c" style="left:1500px;width:155px"></div></div><div class="a row" style="top:249px;height:18px"><div class="c" style="left:0px;width:200px"><span class="t" style="left:1.3px;top:4.4px;font-size:12px;color:#444;transform:scaleX(0.960);">34758</span></div><div class="c" style="left:200px;width:350px"><span class="t" style="left:1.3px;top:4.4px;font-size:12px;color:#444;transform:scaleX(0.973);">78-450 COV FILM 78-450</span></div><div class="c" style="left:550px;width:350px"><span class="t" style="left:1.3px;top:4.4px;font-size:12px;color:#444;transform:scaleX(0.973);">60-514 COV FILM 60-514</span></div><div class="c" style="left:900px;width:100px"><span class="t" style="left:3.2px;top:4.4px;font-size:12px;color:#444;transform:scaleX(0.960);">1780</span></div><div class="c" style="left:1000px;width:100px"><span class="t" style="left:3.2px;top:4.4px;font-size:12px;color:#444;transform:scaleX(0.971);">Jan-17-2021</span></div><div class="c" style="left:1100px;width:100px"><span class="t" style="left:3.2px;top:4.4px;font-size:12px;color:#444;transform:scaleX(0.980);">9 AM</span></div><div class="c" style="left:1200px;width:100px"><span class="t" style="left:3.2px;top:4.4px;font-size:12px;color:#444;transform:scaleX(1.000);">Other</span></div><div class="c" style="left:1300px;width:100px"></div><div class="c" style="left:1400px;width:100px"><span class="t" style="left:3.2px;top:4.4px;font-size:12px;color:#444;transform:scaleX(1.000);">Applied</span></div><div class="c" style="left:1500px;width:155px"></div></div><div class="a row b" style="top:267px;height:19px"><div class="c" style="left:0px;width:200px"><span class="t" style="left:1.3px;top:4.4px;font-size:12px;color:#444;transform:scaleX(0.960);">34608</span></div><div class="c" style="left:200px;width:350px"><span class="t" style="left:1.3px;top:4.4px;font-size:12px;color:#444;transform:scaleX(0.973);">78-450 COV FILM 78-450</span></div><div class="c" style="left:550px;width:350px"><span class="t" style="left:1.3px;top:4.4px;font-size:12px;color:#444;transform:scaleX(0.973);">60-514 COV FILM 60-514</span></div><div class="c" style="left:900px;width:100px"><span class="t" style="left:3.2px;top:4.4px;font-size:12px;color:#444;transform:scaleX(0.960);">4422</span></div><div class="c" style="left:1000px;width:100px"><span class="t" style="left:3.2px;top:4.4px;font-size:12px;color:#444;transform:scaleX(0.971);">Jan-17-2021</span></div><div class="c" style="left:1100px;width:100px"><span class="t" style="left:3.2px;top:4.4px;font-size:12px;color:#444;transform:scaleX(0.980);">9 AM</span></div><div class="c" style="left:1200px;width:100px"><span class="t" style="left:3.2px;top:4.4px;font-size:12px;color:#444;transform:scaleX(1.000);">Other</span></div><div class="c" style="left:1300px;width:100px"></div><div class="c" style="left:1400px;width:100px"><span class="t" style="left:3.2px;top:4.4px;font-size:12px;color:#444;transform:scaleX(1.000);">Applied</span></div><div class="c" style="left:1500px;width:155px"></div></div><div class="a row" style="top:286px;height:19px"><div class="c" style="left:0px;width:200px"><span class="t" style="left:1.3px;top:4.4px;font-size:12px;color:#444;transform:scaleX(0.960);">34607</span></div><div class="c" style="left:200px;width:350px"><span class="t" style="left:1.3px;top:4.4px;font-size:12px;color:#444;transform:scaleX(0.973);">78-450 COV FILM 78-450</span></div><div class="c" style="left:550px;width:350px"><span class="t" style="left:1.3px;top:4.4px;font-size:12px;color:#444;transform:scaleX(0.973);">60-514 COV FILM 60-514</span></div><div class="c" style="left:900px;width:100px"><span class="t" style="left:3.2px;top:4.4px;font-size:12px;color:#444;transform:scaleX(0.960);">3560</span></div><div class="c" style="left:1000px;width:100px"><span class="t" style="left:3.2px;top:4.4px;font-size:12px;color:#444;transform:scaleX(0.971);">Jan-17-2021</span></div><div class="c" style="left:1100px;width:100px"><span class="t" style="left:3.2px;top:4.4px;font-size:12px;color:#444;transform:scaleX(0.980);">9 AM</span></div><div class="c" style="left:1200px;width:100px"><span class="t" style="left:3.2px;top:4.4px;font-size:12px;color:#444;transform:scaleX(1.000);">Other</span></div><div class="c" style="left:1300px;width:100px"></div><div class="c" style="left:1400px;width:100px"><span class="t" style="left:3.2px;top:4.4px;font-size:12px;color:#444;transform:scaleX(1.000);">Applied</span></div><div class="c" style="left:1500px;width:155px"></div></div><div class="a row b" style="top:305px;height:19px"><div class="c" style="left:0px;width:200px"><span class="t" style="left:1.3px;top:4.4px;font-size:12px;color:#444;transform:scaleX(0.960);">34876</span></div><div class="c" style="left:200px;width:350px"><span class="t" style="left:1.3px;top:4.4px;font-size:12px;color:#444;transform:scaleX(0.973);">78-450 COV FILM 78-450</span></div><div class="c" style="left:550px;width:350px"><span class="t" style="left:1.3px;top:4.4px;font-size:12px;color:#444;transform:scaleX(0.973);">60-514 COV FILM 60-514</span></div><div class="c" style="left:900px;width:100px"><span class="t" style="left:3.2px;top:4.4px;font-size:12px;color:#444;transform:scaleX(0.960);">2670</span></div><div class="c" style="left:1000px;width:100px"><span class="t" style="left:3.2px;top:4.4px;font-size:12px;color:#444;transform:scaleX(0.971);">Jan-17-2021</span></div><div class="c" style="left:1100px;width:100px"><span class="t" style="left:3.2px;top:4.4px;font-size:12px;color:#444;transform:scaleX(0.980);">9 AM</span></div><div class="c" style="left:1200px;width:100px"><span class="t" style="left:3.2px;top:4.4px;font-size:12px;color:#444;transform:scaleX(1.000);">Other</span></div><div class="c" style="left:1300px;width:100px"></div><div class="c" style="left:1400px;width:100px"><span class="t" style="left:3.2px;top:4.4px;font-size:12px;color:#444;transform:scaleX(1.000);">Applied</span></div><div class="c" style="left:1500px;width:155px"></div></div><div class="a row" style="top:324px;height:19px"><div class="c" style="left:0px;width:200px"><span class="t" style="left:1.3px;top:4.4px;font-size:12px;color:#444;transform:scaleX(0.960);">35046</span></div><div class="c" style="left:200px;width:350px"><span class="t" style="left:1.3px;top:4.4px;font-size:12px;color:#444;transform:scaleX(0.973);">78-450 COV FILM 78-450</span></div><div class="c" style="left:550px;width:350px"><span class="t" style="left:1.3px;top:4.4px;font-size:12px;color:#444;transform:scaleX(0.973);">60-514 COV FILM 60-514</span></div><div class="c" style="left:900px;width:100px"><span class="t" style="left:3.2px;top:4.4px;font-size:12px;color:#444;transform:scaleX(0.960);">445</span></div><div class="c" style="left:1000px;width:100px"><span class="t" style="left:3.2px;top:4.4px;font-size:12px;color:#444;transform:scaleX(0.971);">Jan-17-2021</span></div><div class="c" style="left:1100px;width:100px"><span class="t" style="left:3.2px;top:4.4px;font-size:12px;color:#444;transform:scaleX(0.980);">9 AM</span></div><div class="c" style="left:1200px;width:100px"><span class="t" style="left:3.2px;top:4.4px;font-size:12px;color:#444;transform:scaleX(1.000);">Other</span></div><div class="c" style="left:1300px;width:100px"></div><div class="c" style="left:1400px;width:100px"><span class="t" style="left:3.2px;top:4.4px;font-size:12px;color:#444;transform:scaleX(1.000);">Applied</span></div><div class="c" style="left:1500px;width:155px"></div></div><div class="a row b" style="top:343px;height:19px"><div class="c" style="left:0px;width:200px"><span class="t" style="left:1.3px;top:4.4px;font-size:12px;color:#444;transform:scaleX(0.960);">35045</span></div><div class="c" style="left:200px;width:350px"><span class="t" style="left:1.3px;top:4.4px;font-size:12px;color:#444;transform:scaleX(0.973);">78-450 COV FILM 78-450</span></div><div class="c" style="left:550px;width:350px"><span class="t" style="left:1.3px;top:4.4px;font-size:12px;color:#444;transform:scaleX(0.973);">60-514 COV FILM 60-514</span></div><div class="c" style="left:900px;width:100px"><span class="t" style="left:3.2px;top:4.4px;font-size:12px;color:#444;transform:scaleX(0.960);">1780</span></div><div class="c" style="left:1000px;width:100px"><span class="t" style="left:3.2px;top:4.4px;font-size:12px;color:#444;transform:scaleX(0.971);">Jan-17-2021</span></div><div class="c" style="left:1100px;width:100px"><span class="t" style="left:3.2px;top:4.4px;font-size:12px;color:#444;transform:scaleX(0.980);">9 AM</span></div><div class="c" style="left:1200px;width:100px"><span class="t" style="left:3.2px;top:4.4px;font-size:12px;color:#444;transform:scaleX(1.000);">Other</span></div><div class="c" style="left:1300px;width:100px"></div><div class="c" style="left:1400px;width:100px"><span class="t" style="left:3.2px;top:4.4px;font-size:12px;color:#444;transform:scaleX(1.000);">Applied</span></div><div class="c" style="left:1500px;width:155px"></div></div><div class="a row" style="top:362px;height:19px"><div class="c" style="left:0px;width:200px"><span class="t" style="left:1.3px;top:4.4px;font-size:12px;color:#444;transform:scaleX(0.960);">35047</span></div><div class="c" style="left:200px;width:350px"><span class="t" style="left:1.3px;top:4.4px;font-size:12px;color:#444;transform:scaleX(0.973);">78-450 COV FILM 78-450</span></div><div class="c" style="left:550px;width:350px"><span class="t" style="left:1.3px;top:4.4px;font-size:12px;color:#444;transform:scaleX(0.973);">60-514 COV FILM 60-514</span></div><div class="c" style="left:900px;width:100px"><span class="t" style="left:3.2px;top:4.4px;font-size:12px;color:#444;transform:scaleX(0.960);">445</span></div><div class="c" style="left:1000px;width:100px"><span class="t" style="left:3.2px;top:4.4px;font-size:12px;color:#444;transform:scaleX(0.971);">Jan-17-2021</span></div><div class="c" style="left:1100px;width:100px"><span class="t" style="left:3.2px;top:4.4px;font-size:12px;color:#444;transform:scaleX(0.980);">9 AM</span></div><div class="c" style="left:1200px;width:100px"><span class="t" style="left:3.2px;top:4.4px;font-size:12px;color:#444;transform:scaleX(1.000);">Other</span></div><div class="c" style="left:1300px;width:100px"></div><div class="c" style="left:1400px;width:100px"><span class="t" style="left:3.2px;top:4.4px;font-size:12px;color:#444;transform:scaleX(1.000);">Applied</span></div><div class="c" style="left:1500px;width:155px"></div></div><div class="a row b" style="top:381px;height:19px"><div class="c" style="left:0px;width:200px"><span class="t" style="left:1.3px;top:4.4px;font-size:12px;color:#444;transform:scaleX(0.960);">34899</span></div><div class="c" style="left:200px;width:350px"><span class="t" style="left:1.3px;top:4.4px;font-size:12px;color:#444;transform:scaleX(0.973);">78-450 COV FILM 78-450</span></div><div class="c" style="left:550px;width:350px"><span class="t" style="left:1.3px;top:4.4px;font-size:12px;color:#444;transform:scaleX(0.973);">60-514 COV FILM 60-514</span></div><div class="c" style="left:900px;width:100px"><span class="t" style="left:3.2px;top:4.4px;font-size:12px;color:#444;transform:scaleX(0.960);">2948</span></div><div class="c" style="left:1000px;width:100px"><span class="t" style="left:3.2px;top:4.4px;font-size:12px;color:#444;transform:scaleX(0.971);">Jan-17-2021</span></div><div class="c" style="left:1100px;width:100px"><span class="t" style="left:3.2px;top:4.4px;font-size:12px;color:#444;transform:scaleX(0.980);">9 AM</span></div><div class="c" style="left:1200px;width:100px"><span class="t" style="left:3.2px;top:4.4px;font-size:12px;color:#444;transform:scaleX(1.000);">Other</span></div><div class="c" style="left:1300px;width:100px"></div><div class="c" style="left:1400px;width:100px"><span class="t" style="left:3.2px;top:4.4px;font-size:12px;color:#444;transform:scaleX(1.000);">Applied</span></div><div class="c" style="left:1500px;width:155px"></div></div></div><div id="tabpanel" class="a"></div><div id="tab" class="a"></div><span class="t" style="left:220.0px;top:522.1px;font-size:12px;color:#222;transform:scaleX(0.9976);">Details</span><span class="t" style="left:249.2px;top:554.6px;font-size:12px;font-weight:700;transform:scaleX(0.9876);">Product Code</span><div class="a combo" style="left:383px;top:547px;width:240px;height:25px"></div><span class="t" style="left:388.3px;top:552.6px;font-size:12px;color:#222;transform:scaleX(0.9420);">32043 Fresh Pork Trim Trace Lean (BF)</span><svg style="left:610.5px;top:557.4px" width="6" height="4" viewBox="0 0 6 4" fill="none" stroke="#505050" stroke-width="1.25"><path d="M.3 .5L3 3.3L5.7 .5"/></svg><div id="grp" class="a"></div><div class="a" style="left:221px;top:578px;width:41px;height:10px;background:#fff"></div><span class="t" style="left:223.8px;top:575.8px;font-size:12px;color:#222;transform:scaleX(1.0432);">Action</span><div class="a radio" style="left:234.0px;top:595.7px"><i></i></div><span class="t" style="left:251.7px;top:596.7px;font-size:12px;color:#222;transform:scaleX(0.9958);">Replace for specific product</span><div class="a radio" style="left:406.0px;top:595.7px"></div><span class="t" style="left:423.4px;top:596.7px;font-size:12px;color:#222;transform:scaleX(0.9922);">Replace for all products</span><div class="a radio" style="left:555.0px;top:595.7px"></div><span class="t" style="left:573.0px;top:596.7px;font-size:12px;color:#222;transform:scaleX(1.0347);">Add</span><div class="a radio" style="left:602.0px;top:595.7px"></div><span class="t" style="left:620.0px;top:596.7px;font-size:12px;color:#222;transform:scaleX(0.9555);">Remove</span><span class="t" style="left:231.9px;top:623.8px;font-size:12px;font-weight:700;transform:scaleX(1.0022);">Item to Replace</span><div class="a combo" style="left:390px;top:616px;width:240px;height:25px"></div><span class="t" style="left:394.8px;top:621.6px;font-size:12px;color:#222;transform:scaleX(0.9864);">41-529 BOX 41-529</span><svg style="left:617.5px;top:626.4px" width="6" height="4" viewBox="0 0 6 4" fill="none" stroke="#505050" stroke-width="1.25"><path d="M.3 .5L3 3.3L5.7 .5"/></svg><span class="t" style="left:231.9px;top:654.8px;font-size:12px;font-weight:700;transform:scaleX(1.0420);">New Item</span><div class="a combo" style="left:390px;top:647px;width:240px;height:25px"></div><span class="t" style="left:394.8px;top:652.6px;font-size:12px;color:#222;transform:scaleX(0.9864);">14-548 BOX 14-548</span><svg style="left:617.5px;top:657.4px" width="6" height="4" viewBox="0 0 6 4" fill="none" stroke="#505050" stroke-width="1.25"><path d="M.3 .5L3 3.3L5.7 .5"/></svg><span class="t" style="left:231.9px;top:685.9px;font-size:12px;color:#222;transform:scaleX(0.9785);">Tare Weight Test Date</span><div class="a tb" style="left:390px;top:678px;width:240px;height:25px;border-color:#d9d9d9"></div><span class="t" style="left:392.4px;top:681.8px;font-size:12px;color:#7d7d7d;transform:scaleX(1.0005);">9/27/2023 7:07:47 AM</span><span class="t" style="left:247.7px;top:722.7px;font-size:12px;font-weight:700;transform:scaleX(1.0275);">New Quantity</span><div class="a tb" style="left:383px;top:715px;width:240px;height:25px"></div><span class="t" style="left:386.2px;top:718.8px;font-size:12px;color:#222;transform:scaleX(.9);">1</span><span class="t" style="left:247.2px;top:753.8px;font-size:12px;font-weight:700;transform:scaleX(1.0041);">Effective Date</span><div class="a dp" style="left:383px;top:747px;width:240px;height:23px"></div><span class="t" style="left:388.3px;top:752.8px;font-size:12px;color:#222;transform:scaleX(1.0170);">1/13/2025</span><svg style="left:597.0px;top:750.5px" width="19" height="17" viewBox="0 0 19 17"><defs><linearGradient id="cg1347" x1="0" y1="0" x2="0" y2="1"><stop offset="0.3" stop-color="#fff"/><stop offset="1" stop-color="#d3d8de"/></linearGradient><linearGradient id="cb1347" x1="0" y1="0" x2="1" y2="0"><stop offset="0" stop-color="#6fa2d8"/><stop offset="1" stop-color="#4584c8"/></linearGradient></defs><rect x="0" y="0" width="19" height="17" fill="url(#cg1347)"/><rect x="0" y="16" width="19" height="1" fill="#9aa0a8"/><rect x="0" y="0" width="1" height="17" fill="#4a4a4a"/><rect x="18" y="0" width="1" height="17" fill="#4a4a4a"/><rect x="0" y="0" width="19" height="4.2" fill="url(#cb1347)"/><rect x="0" y="4.1" width="19" height=".9" fill="#4d5b6b"/><circle cx="9.7" cy="2" r="1.4" fill="#fff"/><text x="9.6" y="14.9" text-anchor="middle" font-family="DejaVu Sans, Liberation Sans, sans-serif" font-size="10" textLength="11.5" lengthAdjust="spacingAndGlyphs" fill="#3a3a3a">15</text></svg><span class="t" style="left:245.3px;top:784.6px;font-size:12px;font-weight:700;transform:scaleX(0.9993);">Effective Hour</span><div class="a combo" style="left:383px;top:777px;width:240px;height:25px"></div><span class="t" style="left:388.3px;top:782.8px;font-size:12px;color:#222;transform:scaleX(1.0916);">0</span><svg style="left:610.5px;top:787.2px" width="6" height="4" viewBox="0 0 6 4" fill="none" stroke="#505050" stroke-width="1.25"><path d="M.3 .5L3 3.3L5.7 .5"/></svg><span class="t" style="left:739.2px;top:555.0px;font-size:12px;font-weight:700;transform:scaleX(0.9387);">Reason</span><div class="a combo" style="left:791px;top:547px;width:240px;height:25px"></div><span class="t" style="left:796.1px;top:553.1px;font-size:12px;color:#222;transform:scaleX(1.0286);">Availability</span><svg style="left:1018.0px;top:557.4px" width="6" height="4" viewBox="0 0 6 4" fill="none" stroke="#505050" stroke-width="1.25"><path d="M.3 .5L3 3.3L5.7 .5"/></svg><span class="t" style="left:718.6px;top:585.8px;font-size:12px;font-weight:700;transform:scaleX(0.9885);">Comments</span><div class="a tb" style="left:791px;top:578px;width:240px;height:50px"></div><span class="t" style="left:744.1px;top:667.0px;font-size:12px;font-weight:700;transform:scaleX(0.9758);">Status</span><div class="a tb" style="left:791px;top:659px;width:240px;height:25px"></div><span class="t" style="left:793.4px;top:662.8px;font-size:12px;color:#222;transform:scaleX(0.9732);">Scheduled</span></main>
</body>
</html>
